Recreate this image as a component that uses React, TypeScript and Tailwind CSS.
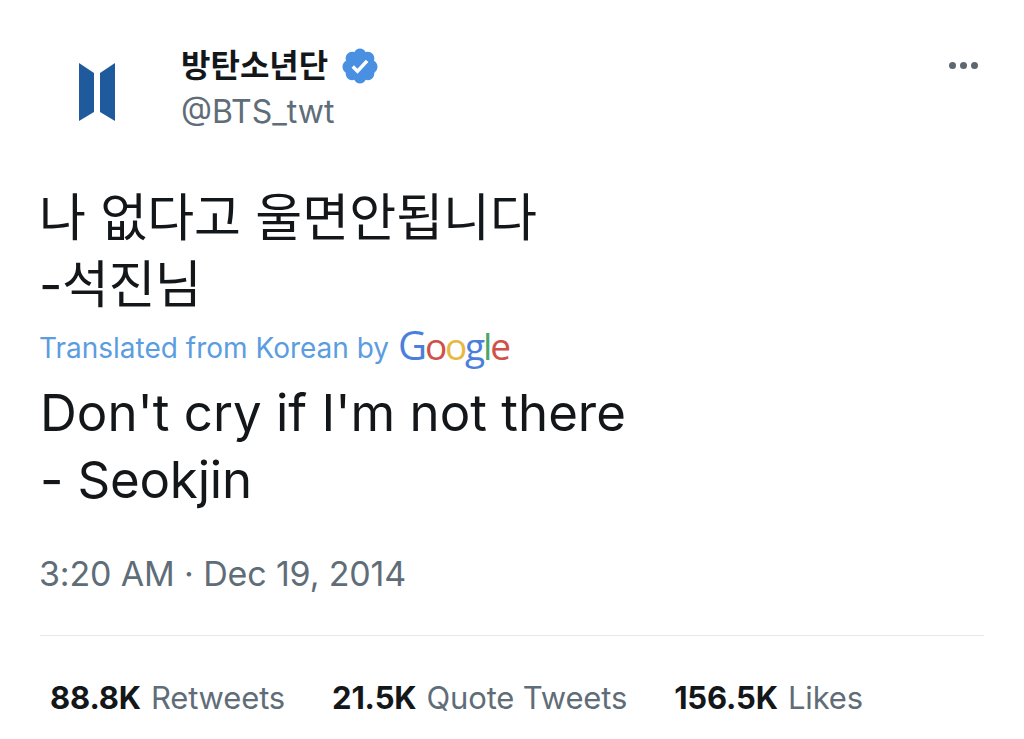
const sans = 'font-["Inter","Liberation_Sans","Noto_Sans_CJK_KR",sans-serif]';

function Logo() {
  return (
    <svg width="38" height="60" viewBox="0 0 38 60" className="shrink-0">
      <path d="M1 1 L16 11 L16 50 L1 59 Z" fill="#1f5a9c" />
      <path d="M37 1 L22 11 L22 50 L37 59 Z" fill="#1f5a9c" />
    </svg>
  );
}

function Badge() {
  return (
    <svg width="40" height="40" viewBox="0 0 24 24" className="shrink-0">
      <path
        fill="#4a90e2"
        d="M22.5 12.5c0-1.58-.875-2.95-2.148-3.6.154-.435.238-.905.238-1.4 0-2.21-1.71-3.998-3.818-3.998-.47 0-.92.084-1.336.25C14.818 2.415 13.51 1.5 12 1.5s-2.816.917-3.437 2.25c-.415-.165-.866-.25-1.336-.25-2.11 0-3.818 1.79-3.818 4 0 .494.083.964.237 1.4-1.272.65-2.147 2.018-2.147 3.6 0 1.495.782 2.798 1.942 3.486-.02.17-.032.34-.032.514 0 2.21 1.708 4 3.818 4 .47 0 .92-.086 1.335-.25.62 1.334 1.926 2.25 3.437 2.25 1.512 0 2.818-.916 3.437-2.25.415.163.865.248 1.336.248 2.11 0 3.818-1.79 3.818-4 0-.174-.012-.344-.033-.513 1.158-.687 1.943-1.99 1.943-3.484z"
      />
      <path fill="#fff" d="M10.54 16.7 6.9 13.08l1.5-1.5 2.07 2.07 5.01-5.46 1.56 1.44z" />
    </svg>
  );
}

function GoogleWord() {
  return (
    <span className={`flex items-baseline text-[37px] leading-none font-medium tracking-[-2.2px] ml-[9px] -mt-[6px] font-["Open_Sans","Liberation_Sans",sans-serif]`}>
      <span className="text-[#4a7fdc] text-[40px]">G</span>
      <span className="text-[#d0504a]">o</span>
      <span className="text-[#e6b93f]">o</span>
      <span className="text-[#4a7fdc]">g</span>
      <span className="text-[#4aa566]">l</span>
      <span className="text-[#d0504a]">e</span>
    </span>
  );
}

function Stat({ value, label }: { value: string; label: string }) {
  return (
    <span className="flex items-baseline gap-[10px] text-[31px] leading-none tracking-[-0.15px]">
      <span className="font-bold text-[#14171a]">{value}</span>
      <span className="text-[#5f6d78]">{label}</span>
    </span>
  );
}

export default function App() {
  return (
    <div className={`${sans} w-[1024px] h-[739px] overflow-hidden bg-white flex flex-col pl-[40px] pr-[40px]`}>
      <header className="flex items-start h-[170px]">
        <div className="w-[141px] pt-[62px] pl-[38px]">
          <Logo />
        </div>
        <div className="flex-1 pt-[44px]">
          <div className="flex items-center gap-[12px] h-[44px]">
            <span className="text-[32px] font-bold leading-none text-[#14171a]">방탄소년단</span>
            <Badge />
          </div>
          <div className="text-[32px] leading-none text-[#5f6d78] mt-[8px]">@BTS_twt</div>
        </div>
        <div className="flex gap-[4px] pt-[62px] pr-[6px]">
          <span className="w-[7px] h-[7px] rounded-full bg-[#5f6770]" />
          <span className="w-[7px] h-[7px] rounded-full bg-[#5f6770]" />
          <span className="w-[7px] h-[7px] rounded-full bg-[#5f6770]" />
        </div>
      </header>

      <div className="text-[51px] leading-[67px] text-[#14171a] mt-[14px] -ml-[1px]">
        <div>나 없다고 울면안됩니다</div>
        <div className="tracking-[-0.5px]">-석진님</div>
      </div>

      <div className="flex items-center h-[44px] mt-[8px] -ml-[1px]">
        <span className="text-[28px] leading-none text-[#5b9de0]">Translated from Korean by</span>
        <GoogleWord />
      </div>

      <div className="text-[51px] leading-[67px] text-[#14171a] mt-[9px]">
        <div>Don't cry if I'm not there</div>
        <div className="tracking-[-0.2px]">- Seokjin</div>
      </div>

      <div className="text-[34px] leading-none text-[#5f6d78] mt-[44px] tracking-[-0.15px] -ml-[1px]">3:20 AM · Dec 19, 2014</div>

      <div className="h-px bg-[#e6e9ec] mt-[44px]" />

      <div className="flex gap-[47px] pl-[10px] mt-[46px]">
        <Stat value="88.8K" label="Retweets" />
        <Stat value="21.5K" label="Quote Tweets" />
        <Stat value="156.5K" label="Likes" />
      </div>
    </div>
  );
}
